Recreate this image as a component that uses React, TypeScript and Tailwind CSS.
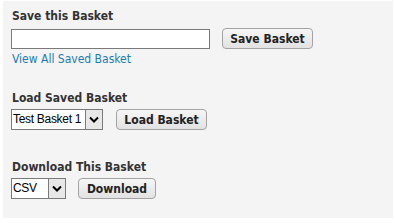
import React from 'react';

const Chevron = () => (
  <svg width="10" height="7" viewBox="0 0 10 7" fill="none">
    <path d="M1 1.5 L5 5.5 L9 1.5" stroke="#000" strokeWidth="2" />
  </svg>
);

// Old-style native select look-alike
const FakeSelect: React.FC<{ value: string; width: string }> = ({ value, width }) => (
  <div className={`flex h-[21px] ${width} border border-[#7a7a7a] bg-white`}>
    <span className="flex-1 pl-[1px] text-[12px] leading-[19px] tracking-[-0.3px] text-black font-['Liberation_Sans',Arial,sans-serif] [font-stretch:normal] whitespace-nowrap overflow-hidden">
      {value}
    </span>
    <span className="flex w-[17px] items-center justify-center border-l border-[#7a7a7a] bg-[#e8e8e8]">
      <Chevron />
    </span>
  </div>
);

const Btn: React.FC<{ label: string; width: string }> = ({ label, width }) => (
  <button
    className={`h-[21px] ${width} rounded-[4px] border border-[#a3a3a3] bg-gradient-to-b from-[#f6f6f6] to-[#e2e2e2] text-[12px] font-bold text-[#222] leading-none`}
  >
    {label}
  </button>
);

const Heading: React.FC<{ children: React.ReactNode }> = ({ children }) => (
  <h3 className="text-[12px] font-bold text-[#333] leading-[14px]">{children}</h3>
);

const App: React.FC = () => {
  return (
    <div className="min-h-[223px] w-[395px] bg-white pl-[3px] pt-[1px] font-['DejaVu_Sans',Verdana,sans-serif] [font-stretch:condensed]">
      <div className="h-[217px] w-[390px] bg-[#f4f4f4] pl-[9px] pt-[8px]">
        <Heading>Save this Basket</Heading>
        <div className="mt-[5px] flex items-center gap-[12px]">
          <input className="h-[20px] w-[199px] -ml-[1px] border border-[#7a7a7a] bg-white outline-none" />
          <Btn label="Save Basket" width="w-[91px]" />
        </div>
        <a className="mt-[3px] block text-[12px] leading-[14px] text-[#1b7db3]">View All Saved Basket</a>

        <div className="mt-[25px]">
          <Heading>Load Saved Basket</Heading>
        </div>
        <div className="mt-[4px] flex items-center gap-[13px] -ml-[1px]">
          <FakeSelect value="Test Basket 1" width="w-[92px]" />
          <Btn label="Load Basket" width="w-[91px]" />
        </div>

        <div className="mt-[30px]">
          <Heading>Download This Basket</Heading>
        </div>
        <div className="mt-[4px] flex items-center gap-[12px] -ml-[1px]">
          <FakeSelect value="CSV" width="w-[55px]" />
          <Btn label="Download" width="w-[78px]" />
        </div>
      </div>
    </div>
  );
};

export default App;
